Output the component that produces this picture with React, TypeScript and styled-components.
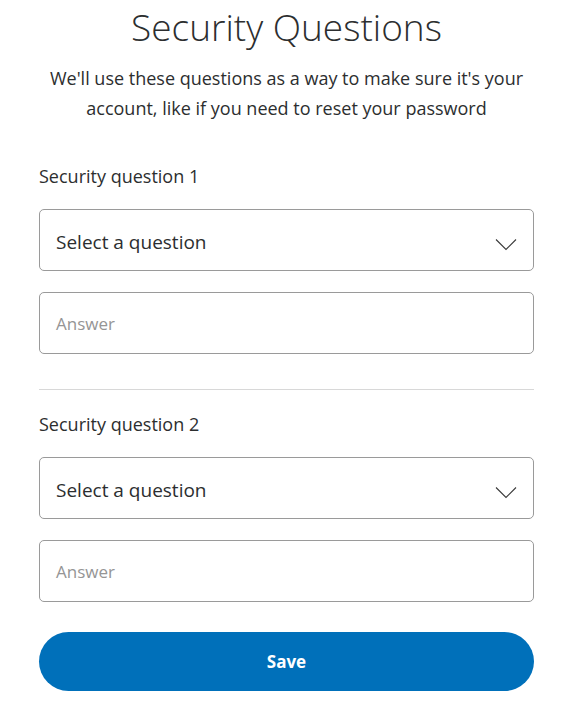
import React from "react";
import styled, { createGlobalStyle } from "styled-components";

const Global = createGlobalStyle`
  html, body { margin: 0; padding: 0; background: #fff; }
  body { font-family: "Open Sans", "Noto Sans", sans-serif; color: #2c2e2f; }
  * { box-sizing: border-box; }
`;

const Page = styled.div`
  width: 495px;
  margin: 0 0 0 39px;
  display: flex;
  flex-direction: column;
`;

const Title = styled.h1`
  margin: 3px 0 0;
  font-size: 37px;
  font-weight: 300;
  line-height: 48px;
  text-align: center;
  color: #2c2e2f;
`;

const Lead = styled.p`
  margin: 12px -20px 0;
  font-size: 18px;
  line-height: 30px;
  text-align: center;
  color: #2c2e2f;
`;

const Section = styled.section<{ $first?: boolean }>`
  display: flex;
  flex-direction: column;
  margin-top: ${(p) => (p.$first ? "41px" : "0")};
`;

const Label = styled.div`
  font-size: 18px;
  line-height: 24px;
  margin: 0 0 21px;
  color: #2c2e2f;
`;

const SelectBox = styled.div`
  height: 62px;
  border: 1px solid #9a9a9a;
  border-radius: 5px;
  display: flex;
  align-items: center;
  justify-content: space-between;
  padding: 3px 16px 0 16px;
  font-size: 19px;
  color: #2c2e2f;
`;

const Chevron = styled.svg`
  width: 22px;
  height: 13px;
  margin-top: 5px;
`;

const AnswerBox = styled.div`
  height: 62px;
  margin-top: 21px;
  border: 1px solid #9a9a9a;
  border-radius: 5px;
  display: flex;
  align-items: center;
  padding: 0 16px;
  font-size: 17px;
  color: #959595;
`;

const Divider = styled.hr`
  border: 0;
  border-top: 1px solid #d8d8d8;
  margin: 35px 0 22px;
  width: 100%;
`;

const Button = styled.button`
  margin-top: 30px;
  height: 59px;
  border: 0;
  border-radius: 30px;
  background: #0070ba;
  color: #fff;
  font-family: "Open Sans", sans-serif;
  font-weight: 700;
  font-size: 17px;
  cursor: pointer;
`;

function Question({ n, first }: { n: number; first?: boolean }) {
  return (
    <Section $first={first}>
      <Label>Security question {n}</Label>
      <SelectBox>
        <span>Select a question</span>
        <Chevron viewBox="0 0 22 13" fill="none">
          <path d="M1 1.5 L11 11.5 L21 1.5" stroke="#3a3a3a" strokeWidth="1.1" />
        </Chevron>
      </SelectBox>
      <AnswerBox>Answer</AnswerBox>
    </Section>
  );
}

export default function App() {
  return (
    <>
      <Global />
      <Page>
        <Title>Security Questions</Title>
        <Lead>
          We'll use these questions as a way to make sure it's your account, like if you need to reset your password
        </Lead>
        <Question n={1} first />
        <Divider />
        <Question n={2} />
        <Button>Save</Button>
      </Page>
    </>
  );
}
